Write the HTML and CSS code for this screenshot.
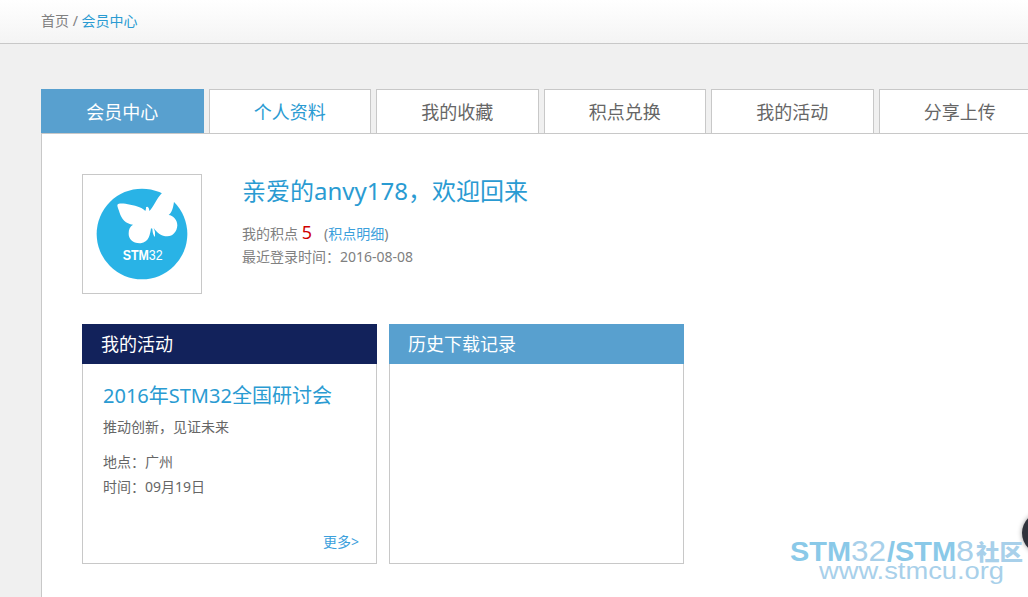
FILE: index.html
```html
<!DOCTYPE html>
<html lang="zh-CN">
<head>
<meta charset="utf-8">
<title>会员中心</title>
<link rel="stylesheet" href="styles.css">
</head>
<body>
<header class="crumbs"><span>首页 / </span><a class="link">会员中心</a></header>
<main class="page">
  <nav class="tabs">
    <a class="tab tab-active">会员中心</a>
    <a class="tab tab-hover">个人资料</a>
    <a class="tab">我的收藏</a>
    <a class="tab">积点兑换</a>
    <a class="tab">我的活动</a>
    <a class="tab">分享上传</a>
  </nav>
  <section class="panel">
    <div class="profile">
      <div class="avatar">
        <svg viewBox="24 30 354 354" width="118" height="118">
          <circle cx="201" cy="207" r="136" fill="#29b3e6"/>
          <path fill="#fff" d="M127 120C130 113 147 115 166 119C186 122 204 129 211 138Q214 130 213 127Q217 123 221 129Q223 134 223 138C235 128 244 101 263 82L282 64L312 98L297 110C295 127 291 142 281 150C294 151 307 164 307 181C306 200 294 214 277 214C259 214 246 203 236 189Q243 202 240 216Q233 210 232 191L228 190C225 209 222 232 197 235C173 236 160 221 161 205C161 193 165 184 174 179C152 177 139 161 134 144C131 133 127 127 127 120Z"/>
          <text x="143" y="286" class="logo-text" textLength="120" lengthAdjust="spacingAndGlyphs"><tspan font-weight="700">STM</tspan>32</text>
        </svg>
      </div>
      <div class="info">
        <h1 class="welcome">亲爱的<span class="name">anvy178</span><span class="punct">，</span>欢迎回来</h1>
        <p class="row points">我的积点 <b class="count">5</b><span class="detail">(<a class="link-light">积点明细</a>)</span></p>
        <p class="row">最近登录时间<span class="punct">：</span><span class="date">2016-08-08</span></p>
      </div>
    </div>
    <div class="cards">
      <article class="card">
        <h2 class="card-head card-head-navy">我的活动</h2>
        <div class="card-body">
          <h3 class="event">2016年STM32全国研讨会</h3>
          <p class="slogan">推动创新<span class="punct">，</span>见证未来</p>
          <p class="meta">地点<span class="punct">：</span>广州</p>
          <p class="meta">时间<span class="punct">：</span>09月19日</p>
          <a class="more">更多&gt;</a>
        </div>
      </article>
      <article class="card">
        <h2 class="card-head">历史下载记录</h2>
        <div class="card-body"></div>
      </article>
    </div>
  </section>
</main>
<div class="float-button"></div>
<svg class="watermark" width="238" height="57" viewBox="790 533 238 57">
  <g class="wm" lengthAdjust="spacingAndGlyphs">
    <text class="wm-bold" x="790" y="561" textLength="61" lengthAdjust="spacingAndGlyphs">STM</text>
    <text class="wm-thin" x="851" y="561" textLength="35" lengthAdjust="spacingAndGlyphs">32</text>
    <text class="wm-bold" x="887" y="561" textLength="8" lengthAdjust="spacingAndGlyphs">/</text>
    <text class="wm-bold" x="895" y="561" textLength="61" lengthAdjust="spacingAndGlyphs">STM</text>
    <text class="wm-thin" x="956" y="561" textLength="18" lengthAdjust="spacingAndGlyphs">8</text>
    <text class="wm-cjk" x="976" y="560" textLength="47" lengthAdjust="spacingAndGlyphs">社区</text>
    <text class="wm-url" x="819" y="579" textLength="185" lengthAdjust="spacingAndGlyphs">www.stmcu.org</text>
  </g>
</svg>
</body>
</html>
```
FILE: styles.css
```css
* { box-sizing: border-box; }
body {
  margin: 0;
  height: 597px;
  overflow: hidden;
  position: relative;
  background: #f0f0f0;
  color: #666;
  font: 14px/22px "Noto Sans", "Noto Sans CJK SC", sans-serif;
}
h1, h2, h3, p { margin: 0; font-weight: 400; white-space: nowrap; }
.punct { font-family: "Noto Sans CJK TC", sans-serif; }
.crumbs {
  height: 44px;
  padding: 10px 0 0 41px;
  border-bottom: 1px solid #c8c8c8;
  background: linear-gradient(#fff, #f4f4f4);
  color: #808080;
}
.link { color: #2a9bd2; }
.link-light { color: #3ba0dc; }
.page { padding: 45px 0 0 41px; }
.tabs { display: flex; gap: 5px; width: 1100px; }
.tab {
  width: 162.5px;
  height: 44px;
  flex: none;
  border: 1px solid #c8c8c8;
  border-bottom: 0;
  background: #fff;
  font-size: 18px;
  line-height: 45px;
  text-align: center;
}
.tab-active { background: #58a0cf; border-color: #58a0cf; color: #fff; }
.tab-hover { color: #2a9bd2; }
.panel {
  height: 480px;
  padding: 40px;
  border: 1px solid #c8c8c8;
  border-right: 0;
  background: #fff;
}
.profile { display: flex; gap: 40px; height: 150px; }
.avatar { width: 120px; height: 120px; border: 1px solid #c8c8c8; }
.avatar svg { display: block; }
.logo-text { font-family: "Liberation Sans", sans-serif; font-size: 43px; fill: #fff; }
.info { color: #808080; }
.welcome { font-size: 24px; line-height: 32px; margin-bottom: 14px; color: #2a9bd2; }
.count { font-size: 18px; font-weight: 400; color: #d00000; }
.detail { margin-left: 12px; }
.cards { display: flex; gap: 12px; }
.card { width: 295px; height: 240px; display: flex; flex-direction: column; }
.card-head { height: 40px; padding-left: 19px; background: #58a0cf; color: #fff; font-size: 18px; line-height: 41px; }
.card-head-navy { background: #12225b; }
.card-body {
  flex: 1;
  display: flex;
  flex-direction: column;
  padding: 17px 17px 10px 20px;
  border: 1px solid #c8c8c8;
  border-top: 0;
}
.event { font-size: 20px; line-height: 30px; color: #2a9bd2; }
.slogan { line-height: 30px; margin-bottom: 7px; }
.meta { line-height: 24px; }
.more { margin-top: auto; align-self: flex-end; color: #3ba0dc; }
.float-button {
  position: absolute;
  left: 1022px;
  top: 512px;
  width: 42px;
  height: 42px;
  border-radius: 50%;
  background: #30333c;
  box-shadow: 0 0 5px rgba(0, 0, 0, .4);
}
.watermark { position: absolute; left: 790px; top: 533px; }
.wm-bold { font: 700 28px "Liberation Sans", sans-serif; fill: #8ac9e8; }
.wm-thin { font: 29px "Liberation Sans", sans-serif; fill: #a8d0ea; }
.wm-cjk { font: 900 22px "Noto Sans CJK SC", sans-serif; fill: #a8d0ea; }
.wm-url { font: 24px "Liberation Sans", sans-serif; fill: #a8d0ea; }
```
